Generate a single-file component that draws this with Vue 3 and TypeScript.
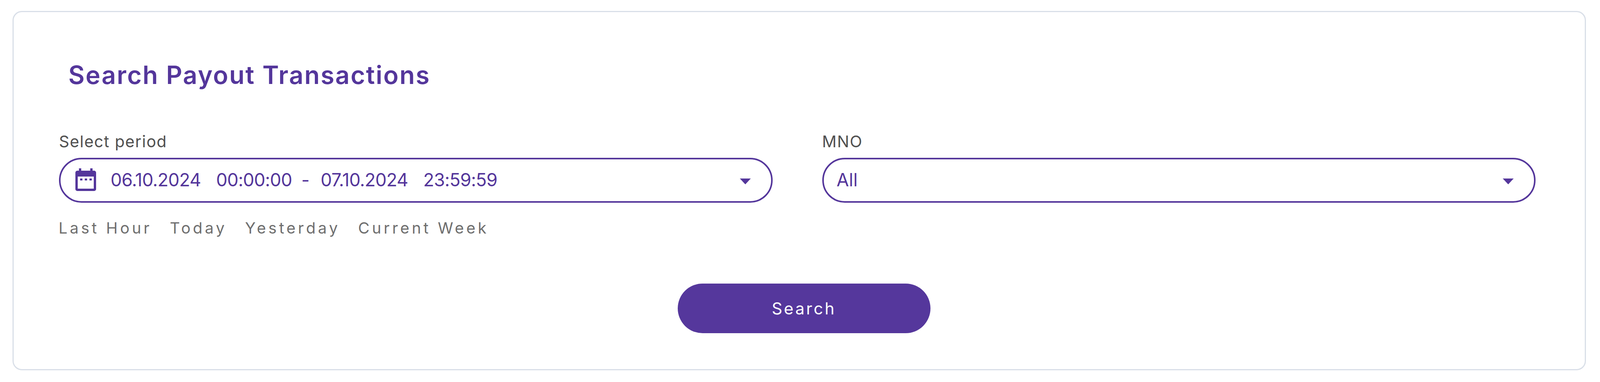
<script setup lang="ts">
const shortcuts = ['Last Hour', 'Today', 'Yesterday', 'Current Week']
</script>

<template>
  <div class="page">
    <section class="card">
      <h2 class="title">Search Payout Transactions</h2>

      <div class="fields">
        <div class="field">
          <label class="field-label">Select period</label>
          <div class="select-box">
            <svg class="calendar" viewBox="0 0 53 58" aria-hidden="true">
              <path
                fill-rule="evenodd"
                d="M9 0h6v6h23V0h6v6h4a5 5 0 0 1 5 5v42a5 5 0 0 1-5 5H5a5 5 0 0 1-5-5V11a5 5 0 0 1 5-5h4V0ZM6 21v31h41V21H6Z"
              />
              <path d="M12 26h6v5h-6zM24 26h6v5h-6zM36 26h6v5h-6z" />
            </svg>
            <div class="date-range">
              <span>06.10.2024</span>
              <span>00:00:00</span>
              <span class="dash">-</span>
              <span>07.10.2024</span>
              <span>23:59:59</span>
            </div>
            <span class="arrow"></span>
          </div>
          <div class="shortcuts">
            <span v-for="item in shortcuts" :key="item" class="shortcut">{{ item }}</span>
          </div>
        </div>

        <div class="field">
          <label class="field-label">MNO</label>
          <div class="select-box select-box--plain">
            <span class="select-value">All</span>
            <span class="arrow"></span>
          </div>
        </div>
      </div>

      <div class="actions">
        <button class="search-btn">Search</button>
      </div>
    </section>
  </div>
</template>

<style>
body {
  background: #fff;
}
</style>

<style scoped>
.page {
  padding: 28px 36px 30px 32px;
  font-family: 'Inter', 'Noto Sans', sans-serif;
}

.card {
  box-sizing: border-box;
  height: 920px;
  padding: 122px 126px 0 116px;
  border: 3px solid #d9dfe8;
  border-radius: 24px;
  background: #fff;
}

.title {
  margin: 0 0 0 24px;
  font-size: 64px;
  line-height: 78px;
  font-weight: 600;
  letter-spacing: 2.4px;
  color: #54369b;
}

.fields {
  display: grid;
  grid-template-columns: 1fr 1fr;
  column-gap: 127px;
  margin-top: 104px;
}

.field-label {
  display: block;
  font-size: 41px;
  line-height: 54px;
  letter-spacing: 1.5px;
  color: #505050;
}

.select-box {
  box-sizing: border-box;
  display: flex;
  align-items: center;
  height: 115px;
  margin-top: 15px;
  padding: 0 52px 0 38px;
  border: 4px solid #54369b;
  border-radius: 58px;
  color: #54369b;
  font-size: 46px;
}

.select-box--plain {
  padding-left: 33px;
}

.calendar {
  flex: none;
  width: 53px;
  height: 58px;
  margin: -4px 37px 0 0;
  fill: #54369b;
}

.date-range {
  display: flex;
  gap: 39px;
  margin-bottom: 4px;
  letter-spacing: -0.8px;
}

.dash {
  margin: 0 -10px 0 -15px;
}

.select-value {
  margin-bottom: 4px;
}

.arrow {
  width: 0;
  height: 0;
  margin: 5px 0 0 auto;
  border-top: 15px solid #54369b;
  border-left: 14px solid transparent;
  border-right: 14px solid transparent;
}

.shortcuts {
  display: flex;
  gap: 46px;
  margin: 40px 0 0 -1px;
}

.shortcut {
  font-size: 40px;
  line-height: 50px;
  letter-spacing: 6.2px;
  color: #6f6f6f;
}

.actions {
  display: flex;
  justify-content: center;
  margin-top: 117px;
  padding-left: 34px;
}

.search-btn {
  width: 647px;
  height: 127px;
  border: none;
  border-radius: 64px;
  background: #55379c;
  color: #fff;
  font-family: inherit;
  font-size: 42px;
  letter-spacing: 4.2px;
}
</style>
